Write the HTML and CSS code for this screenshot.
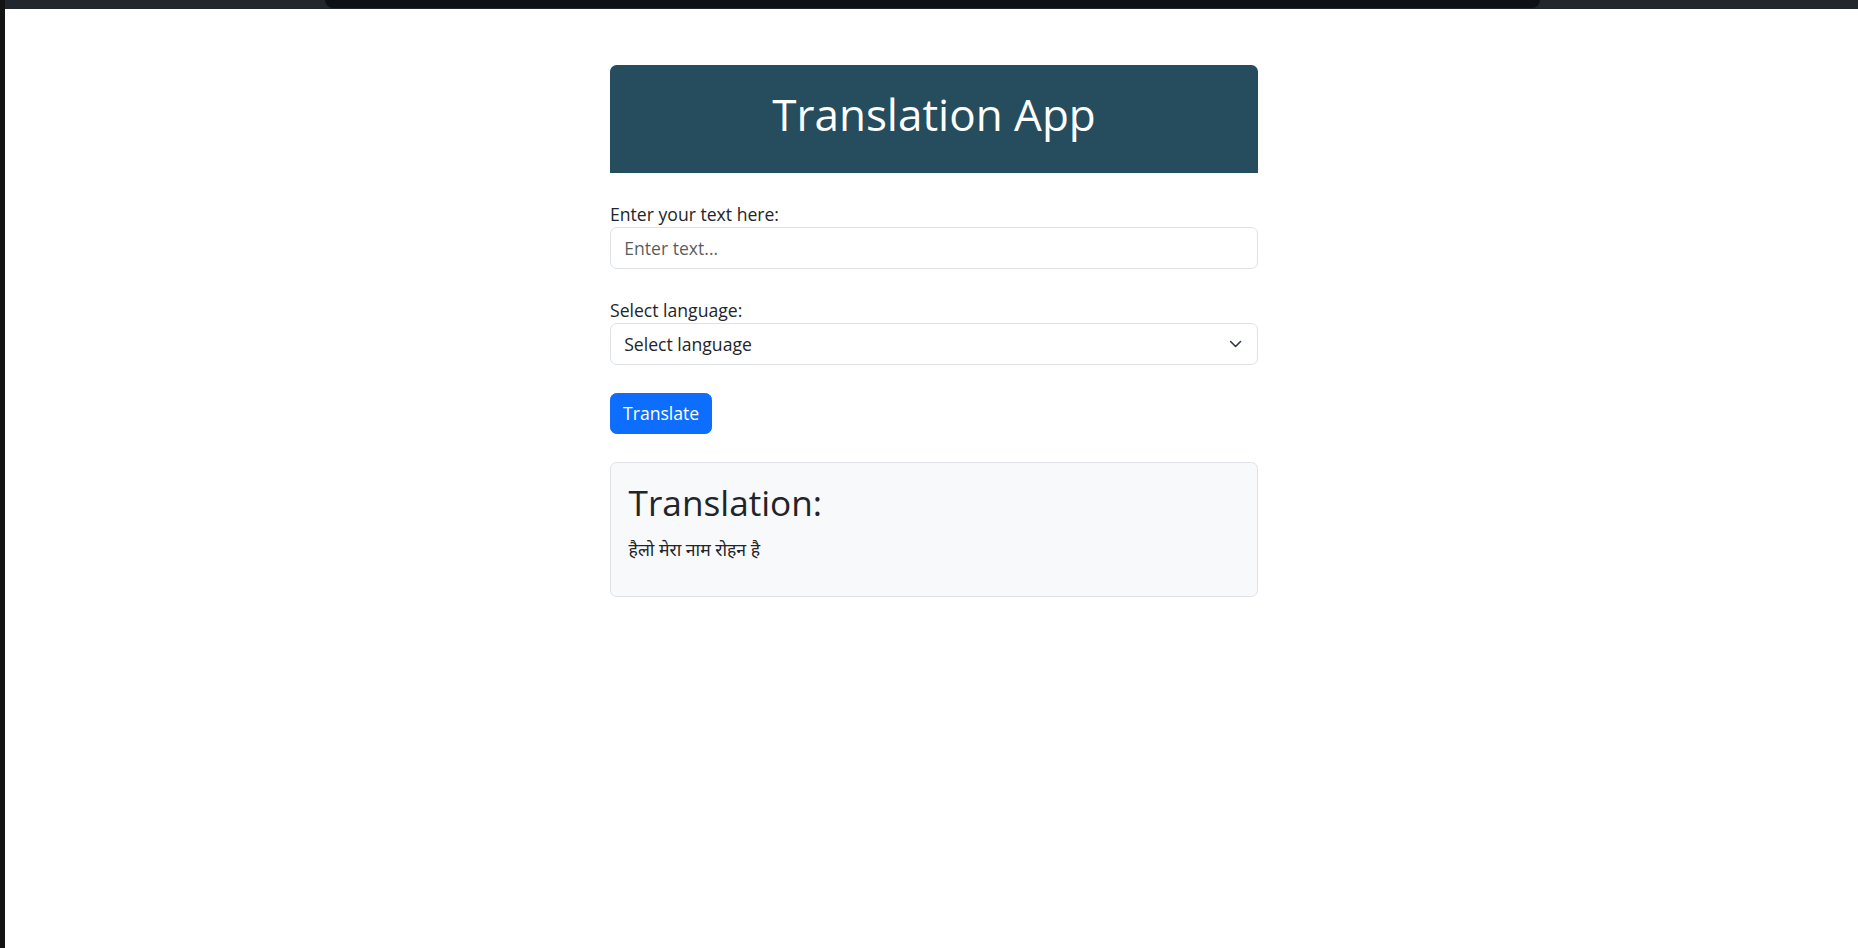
FILE: index.html
```html
<!DOCTYPE html>
<html lang="en">
<head>
<meta charset="utf-8">
<title>Translation App</title>
<link rel="stylesheet" href="styles.css">
</head>
<body>
<div class="frame">
  <div class="edge"></div>
  <div class="window">
    <div class="topbar"><div class="tab"></div></div>
    <main class="page">
      <div class="container">
        <header class="banner"><h1 class="banner-title">Translation App</h1></header>
        <div class="field">
          <label class="field-label" for="txt">Enter your text here:</label>
          <input class="control" id="txt" type="text" placeholder="Enter text...">
        </div>
        <div class="field">
          <label class="field-label" for="lang">Select language:</label>
          <div class="select-wrap">
            <select class="control select" id="lang">
              <option>Select language</option>
              <option>Hindi</option>
              <option>French</option>
              <option>Spanish</option>
            </select>
            <svg class="chev" viewBox="0 0 16 16" aria-hidden="true"><path d="m2 5 6 6 6-6" fill="none" stroke="#343a40" stroke-width="2" stroke-linecap="round" stroke-linejoin="round"/></svg>
          </div>
        </div>
        <button class="btn" type="button">Translate</button>
        <section class="result">
          <h2 class="result-title">Translation:</h2>
          <p class="result-text">हैलो मेरा नाम रोहन है</p>
        </section>
      </div>
    </main>
  </div>
</div>
</body>
</html>
```

FILE: styles.css
```css
* { box-sizing: border-box; }

html, body {
  margin: 0;
  padding: 0;
  height: 100%;
}

body {
  font-family: "Open Sans", "Noto Sans", "Noto Sans Devanagari", sans-serif;
  font-size: 17.6px;
  line-height: 26.4px;
  color: #212529;
  background: #ffffff;
}

.frame {
  display: flex;
  height: 948px;
  overflow: hidden;
}

.edge {
  width: 5px;
  flex: none;
  background: #131313;
}

.window {
  flex: 1;
  display: flex;
  flex-direction: column;
  min-width: 0;
}

.topbar {
  height: 9px;
  flex: none;
  background: #22272e;
  display: flex;
  padding-left: 320px;
}

.tab {
  width: 1215px;
  height: 8px;
  background: #0d1117;
  border-radius: 0 0 8px 8px;
}

.page {
  flex: 1;
  background: #ffffff;
  padding: 56px 0 0 5px;
}

.container {
  width: 648px;
  margin: 0 auto;
  display: flex;
  flex-direction: column;
  align-items: flex-start;
  gap: 28px;
}

.banner {
  align-self: stretch;
  background: #264d5e;
  border-radius: 6.6px 6.6px 0 0;
  padding: 23px 0;
}

.banner-title {
  margin: 0 0 8.8px;
  font-size: 44px;
  line-height: 52.8px;
  font-weight: 400;
  color: #ffffff;
  text-align: center;
}

.field {
  align-self: stretch;
  display: flex;
  flex-direction: column;
}

.field-label {
  font-size: 17.6px;
  line-height: 26.4px;
}

.control {
  display: block;
  width: 100%;
  height: 41.6px;
  padding: 6.6px 13.2px;
  font-family: inherit;
  font-size: 17.6px;
  line-height: 26.4px;
  color: #212529;
  background: #ffffff;
  border: 1px solid #dee2e6;
  border-radius: 6.6px;
  outline: none;
}

.control::placeholder {
  color: rgba(33, 37, 41, 0.75);
}

.select-wrap {
  position: relative;
}

.select {
  appearance: none;
  -webkit-appearance: none;
  padding-right: 39.6px;
}

.chev {
  position: absolute;
  right: 15.4px;
  top: 50%;
  width: 13.2px;
  height: 13.2px;
  transform: translateY(-50%);
  pointer-events: none;
}

.btn {
  font-family: inherit;
  font-size: 17.6px;
  line-height: 26.4px;
  color: #ffffff;
  background: #0d6efd;
  border: 1px solid #0d6efd;
  border-radius: 6.6px;
  padding: 6.6px 12px;
  cursor: pointer;
}

.result {
  align-self: stretch;
  background: #f8f9fa;
  border: 1px solid #dee2e6;
  border-radius: 6.6px;
  padding: 17.6px;
}

.result-title {
  margin: 0 0 8.8px;
  font-size: 35.2px;
  line-height: 42.2px;
  font-weight: 400;
}

.result-text {
  margin: 0 0 13px;
  padding-top: 7px;
  font-size: 17.6px;
  line-height: 26.4px;
  font-family: "Noto Sans Devanagari", "Lohit Devanagari", "Open Sans", sans-serif;
}
```
